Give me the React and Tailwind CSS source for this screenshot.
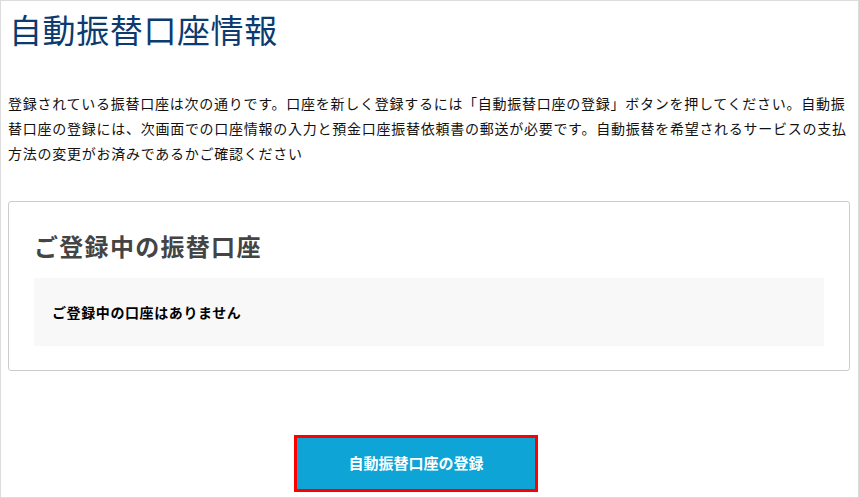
export default function App() {
  const font = { fontFamily: '"Noto Sans CJK JP", "Noto Sans", sans-serif' };
  return (
    <div
      className="w-[859px] h-[498px] border border-[#dcdcdc] bg-white px-[7px] pt-[8px] box-border overflow-hidden text-[#111]"
      style={font}
    >
      <h1 className="text-[33px] leading-[40px] font-normal text-[#0b3b70] pl-[1px] tracking-[0.6px]">
        自動振替口座情報
      </h1>
      <p className="mt-[42px] text-[14px] leading-[25px] tracking-[0.74px]">
        登録されている振替口座は次の通りです。口座を新しく登録するには「自動振替口座の登録」ボタンを押してください。自動振替口座の登録には、次画面での口座情報の入力と預金口座振替依頼書の郵送が必要です。自動振替を希望されるサービスの支払方法の変更がお済みであるかご確認ください
      </p>
      <div className="mt-[35px] w-[842px] border border-[#cccccc] rounded-[3px] px-[25px] pt-[28px] pb-[24px]">
        <h2 className="text-[24px] leading-[32px] font-bold text-[#444] tracking-[1.3px]">
          ご登録中の振替口座
        </h2>
        <div className="mt-[16px] h-[68px] bg-[#f8f8f8] flex items-center px-[18px]">
          <span className="text-[14px] font-bold tracking-[0.6px] text-black">
            ご登録中の口座はありません
          </span>
        </div>
      </div>
      <div className="mt-[64px] ml-[286px]">
        <button className="w-[244px] h-[57px] border-[3px] border-[#ff0000] bg-[#0ea4d5] text-white text-[15px] font-bold flex items-center justify-center">
          自動振替口座の登録
        </button>
      </div>
    </div>
  );
}
